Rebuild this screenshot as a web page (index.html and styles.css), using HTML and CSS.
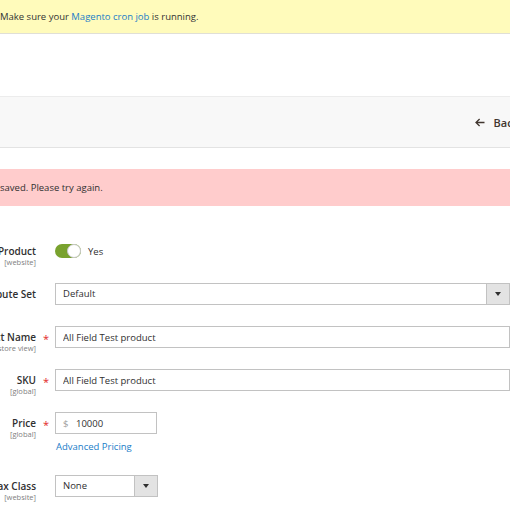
FILE: index.html
```html
<!DOCTYPE html>
<html>
<head>
<meta charset="utf-8">
<link rel="stylesheet" href="styles.css">
</head>
<body>
<div class="notice">Make sure your&nbsp;<a class="link" href="#">Magento cron job</a>&nbsp;is running.</div>
<div class="page-actions">
  <button class="back"><svg class="arrow" width="10" height="9" viewBox="0 0 10 9"><path d="M9.5 4.5H1.2M4.6 1L1 4.5L4.6 8" fill="none" stroke="#41362f" stroke-width="1.3"/></svg><span>Back</span></button>
</div>
<div class="message-error">saved. Please try again.</div>
<div class="form">
  <div class="row">
    <div class="label"><span class="title">Enable Product</span><span class="scope">[website]</span></div>
    <div class="req"></div>
    <div class="control toggle-wrap">
      <span class="toggle"><span class="knob"></span></span>
      <span class="toggle-text">Yes</span>
    </div>
  </div>
  <div class="row">
    <div class="label"><span class="title">Attribute Set</span></div>
    <div class="req"></div>
    <div class="control">
      <div class="select wide"><span class="select-value">Default</span><span class="select-btn"><span class="tri"></span></span></div>
    </div>
  </div>
  <div class="row">
    <div class="label"><span class="title">Product Name</span><span class="scope">[store view]</span></div>
    <div class="req">*</div>
    <div class="control"><input class="input wide" type="text" value="All Field Test product"></div>
  </div>
  <div class="row">
    <div class="label"><span class="title">SKU</span><span class="scope">[global]</span></div>
    <div class="req">*</div>
    <div class="control"><input class="input wide" type="text" value="All Field Test product"></div>
  </div>
  <div class="row">
    <div class="label"><span class="title">Price</span><span class="scope">[global]</span></div>
    <div class="req">*</div>
    <div class="control">
      <div class="price"><span class="currency">$</span><input class="price-input" type="text" value="10000"></div>
      <a class="link adv" href="#">Advanced Pricing</a>
    </div>
  </div>
  <div class="row">
    <div class="label"><span class="title">Tax Class</span><span class="scope">[website]</span></div>
    <div class="req"></div>
    <div class="control">
      <div class="select small"><span class="select-value">None</span><span class="select-btn"><span class="tri"></span></span></div>
    </div>
  </div>
</div>
</body>
</html>
```
FILE: styles.css
```css
html, body {
  margin: 0;
  padding: 0;
  background: #fff;
}
body {
  width: 510px;
  height: 510px;
  overflow: hidden;
  font-family: "Open Sans", "Liberation Sans", sans-serif;
  font-size: 9.5px;
  color: #303030;
}
.link {
  color: #1a7dc8;
  text-decoration: none;
}
.notice {
  height: 33px;
  background: #fffbbb;
  border-bottom: 1px solid #e0dfd6;
  display: flex;
  align-items: center;
  white-space: nowrap;
  color: #333;
}
.page-actions {
  margin-top: 62px;
  height: 50px;
  background: #f8f8f8;
  border-top: 1px solid #ececec;
  border-bottom: 1px solid #e3e3e3;
  display: flex;
  justify-content: flex-end;
  align-items: center;
}
.back {
  border: 0;
  background: transparent;
  padding: 0;
  margin-right: -9px;
  font-family: "Open Sans", "Liberation Sans", sans-serif;
  font-size: 11px;
  font-weight: 600;
  color: #41362f;
  display: flex;
  align-items: center;
  gap: 9px;
}
.arrow {
  display: block;
  margin-left: -2px;
}
.message-error {
  margin-top: 21px;
  height: 37px;
  background: #ffcccc;
  display: flex;
  align-items: center;
  white-space: nowrap;
}
.form {
  margin-top: 34px;
}
.row {
  display: grid;
  grid-template-columns: 36px 19px 455px;
  align-items: start;
  margin-bottom: 21px;
}
.label {
  height: 22px;
  display: flex;
  flex-direction: column;
  align-items: flex-end;
  padding-top: 5px;
  box-sizing: border-box;
  white-space: nowrap;
}
.title {
  font-weight: 600;
  font-size: 10px;
  line-height: 13px;
}
.scope {
  font-size: 7.5px;
  line-height: 9px;
  color: #808080;
}
.req {
  color: #e22626;
  font-size: 11px;
  text-align: center;
  line-height: 22px;
  height: 22px;
  padding-top: 2px;
  padding-left: 1px;
  box-sizing: border-box;
}
.control {
  display: flex;
  flex-direction: column;
  align-items: flex-start;
}
.toggle-wrap {
  flex-direction: row;
  align-items: center;
  height: 22px;
  gap: 7px;
}
.toggle {
  width: 26px;
  height: 14px;
  border-radius: 7px;
  background: #79a22e;
  display: flex;
  justify-content: flex-end;
}
.knob {
  width: 14px;
  height: 14px;
  box-sizing: border-box;
  border-radius: 50%;
  background: #fff;
  border: 1px solid #c8c8c8;
}
.toggle-text {
  color: #303030;
}
.input {
  box-sizing: border-box;
  height: 22px;
  margin: 0;
  border: 1px solid #c2c2c2;
  padding: 0 7px;
  font-family: "Open Sans", "Liberation Sans", sans-serif;
  font-size: 9.5px;
  color: #303030;
  background: #fff;
  outline: none;
}
.wide {
  width: 455px;
}
.select {
  box-sizing: border-box;
  height: 22px;
  border: 1px solid #c2c2c2;
  display: flex;
  background: #fff;
}
.select.small {
  width: 103px;
}
.select-value {
  flex: 1;
  padding-left: 7px;
  line-height: 20px;
}
.select-btn {
  width: 22px;
  background: #e3e3e3;
  border-left: 1px solid #c2c2c2;
  display: flex;
  align-items: center;
  justify-content: center;
}
.tri {
  width: 0;
  height: 0;
  border-left: 3px solid transparent;
  border-right: 3px solid transparent;
  border-top: 4px solid #303030;
}
.price {
  box-sizing: border-box;
  width: 102px;
  height: 22px;
  border: 1px solid #c2c2c2;
  display: flex;
  align-items: center;
  padding-left: 7px;
}
.currency {
  color: #9e9e9e;
  width: 13px;
}
.price-input {
  border: 0;
  padding: 0;
  margin: 0;
  width: 70px;
  height: 18px;
  font-family: "Open Sans", "Liberation Sans", sans-serif;
  font-size: 9.5px;
  color: #303030;
  outline: none;
  background: transparent;
}
.adv {
  margin-top: 6px;
  line-height: 14px;
  padding-left: 1px;
}
```
